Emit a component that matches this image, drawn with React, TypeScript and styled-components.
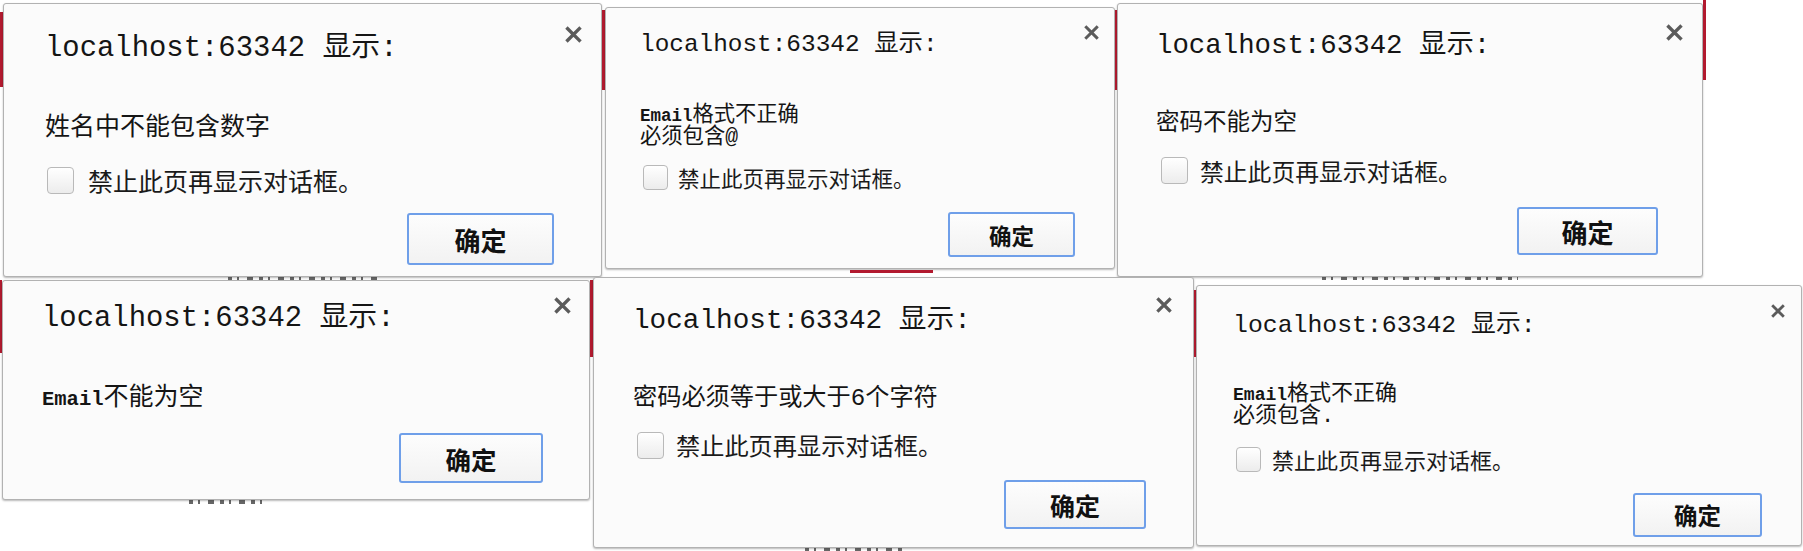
import styled, { createGlobalStyle } from 'styled-components';

const GlobalStyle = createGlobalStyle`
	html, body {
		margin: 0;
		padding: 0;
		background: #fff;
	}
	body {
		width: 1803px;
		height: 551px;
		overflow: hidden;
		font-family: "Noto Sans CJK SC", sans-serif;
		color: #111;
	}
`;

const CJK = `"Noto Sans CJK SC", "Noto Sans", sans-serif`;
const MONO = `"Liberation Mono", "Noto Sans CJK SC", monospace`;

type Spec = {
	w: number;
	h: number;
	mt: number;
	px: number;
	titleSize: number;
	titleTop: number;
	close: { cx: number; cy: number; size: number };
	msg: { top: number; size: number; line: number; lines: string[] };
	check?: { top: number; box: number; left: number; gap: number; size: number };
	btn: { w: number; h: number; right: number; bottom: number; size: number };
};

const Collage = styled.div`
	display: flex;
	flex-direction: column;
`;

const Row = styled.div<{ $h: number }>`
	display: flex;
	align-items: flex-start;
	height: ${p => p.$h}px;
`;

// a sliver of the page behind the dialog, with its red edge
const Seam = styled.div<{ $w: number; $from: number; $to: number }>`
	flex: none;
	align-self: stretch;
	width: ${p => p.$w}px;
	background: linear-gradient(
		to bottom,
		transparent ${p => p.$from}px,
		#b21a2f ${p => p.$from}px,
		#b21a2f ${p => p.$to}px,
		transparent ${p => p.$to}px
	);
`;

const Shot = styled.div`
	flex: none;
	display: flex;
	flex-direction: column;
`;

const Under = styled.div<{ $offset: number; $len: number }>`
	margin-top: 1px;
	margin-left: ${p => p.$offset}px;
	width: ${p => p.$len}px;
	height: 3px;
	background: #b21a2f;
`;

// bits of the form text behind, cut off by the crop
const Peek = styled.div<{ $h: number; $offset: number; $len: number }>`
	flex: none;
	height: ${p => p.$h}px;
	margin-left: ${p => p.$offset}px;
	width: ${p => p.$len}px;
	background: repeating-linear-gradient(
		90deg,
		#333 0 4px,
		transparent 4px 9px,
		#333 9px 11px,
		transparent 11px 19px,
		#333 19px 25px,
		transparent 25px 31px
	);
	opacity: 0.75;
`;

const Box = styled.div<{ $w: number; $h: number; $mt: number }>`
	flex: none;
	box-sizing: border-box;
	width: ${p => p.$w}px;
	height: ${p => p.$h}px;
	margin-top: ${p => p.$mt}px;
	display: flex;
	flex-direction: column;
	background: #fbfbfb;
	border: 1px solid #b2b2b2;
	border-radius: 3px;
	box-shadow: 0 1px 2px rgba(0, 0, 0, 0.28);
`;

const Header = styled.div<{ $pl: number }>`
	display: flex;
	justify-content: space-between;
	align-items: flex-start;
	padding-left: ${p => p.$pl}px;
`;

const Title = styled.div<{ $size: number; $top: number }>`
	margin-top: ${p => p.$top}px;
	font-family: ${MONO};
	font-size: ${p => p.$size}px;
	line-height: 1;
	white-space: nowrap;
	color: #151515;
`;

const Close = styled.span<{ $size: number; $top: number; $right: number }>`
	display: block;
	width: ${p => p.$size}px;
	height: ${p => p.$size}px;
	margin-top: ${p => p.$top}px;
	margin-right: ${p => p.$right}px;
	color: #5b5b5b;

	svg {
		display: block;
		width: 100%;
		height: 100%;
	}
`;

const Message = styled.div<{ $size: number; $line: number; $gap: number; $pl: number }>`
	margin-top: ${p => p.$gap}px;
	padding-left: ${p => p.$pl}px;
	font-family: ${MONO};
	font-size: ${p => p.$size}px;
	line-height: ${p => p.$line}px;
	white-space: nowrap;
	color: #151515;
`;

const MessageLine = styled.div<{ $line: number }>`
	height: ${p => p.$line}px;
`;

const Latin = styled.span`
	font-weight: 700;
	font-size: 0.82em;
	line-height: 0;
`;

const CheckRow = styled.label<{ $gap: number; $pl: number; $h: number }>`
	display: flex;
	align-items: center;
	margin-top: ${p => p.$gap}px;
	padding-left: ${p => p.$pl}px;
	height: ${p => p.$h}px;
`;

const CheckBox = styled.span<{ $box: number; $gap: number }>`
	flex: none;
	box-sizing: border-box;
	width: ${p => p.$box}px;
	height: ${p => p.$box}px;
	margin-right: ${p => p.$gap}px;
	border: 1.5px solid #b9b9b9;
	border-radius: 4px;
	background: linear-gradient(#ffffff, #ececec);
`;

const CheckLabel = styled.span<{ $size: number }>`
	font-family: ${CJK};
	font-size: ${p => p.$size}px;
	line-height: 1;
	white-space: nowrap;
	color: #1a1a1a;
`;

const Footer = styled.div<{ $right: number; $bottom: number }>`
	margin-top: auto;
	display: flex;
	justify-content: flex-end;
	padding-right: ${p => p.$right}px;
	padding-bottom: ${p => p.$bottom}px;
`;

const OkButton = styled.button<{ $w: number; $h: number; $size: number }>`
	box-sizing: border-box;
	width: ${p => p.$w}px;
	height: ${p => p.$h}px;
	padding: 0;
	border: 2px solid #6f9fe9;
	border-radius: 3px;
	background: linear-gradient(#fdfdfd, #f2f2f2);
	font-family: ${CJK};
	font-weight: 700;
	font-size: ${p => p.$size}px;
	color: #111;
`;

function renderLine(text: string) {
	// "Email" comes out in the narrow bold bitmap face
	return text.split(/(Email)/).map((part, i) =>
		part === 'Email' ? <Latin key={i}>{part}</Latin> : part
	);
}

function Dialog({ s }: { s: Spec }) {
	const titleBottom = s.titleTop - 1 + s.titleSize;
	const msgBottom = s.msg.top + s.msg.lines.length * s.msg.line;

	return <Box $w={s.w} $h={s.h} $mt={s.mt}>
		<Header $pl={s.px - 1}>
			<Title $size={s.titleSize} $top={s.titleTop - 1}>localhost:63342 显示:</Title>
			<Close
				$size={s.close.size}
				$top={s.close.cy - s.close.size / 2 - 1}
				$right={s.w - s.close.cx - s.close.size / 2 - 1}
			>
				<svg viewBox="0 0 16 16">
					<path d="M2.5 2.5L13.5 13.5M13.5 2.5L2.5 13.5" stroke="currentColor" strokeWidth="3.2" strokeLinecap="square" fill="none" />
				</svg>
			</Close>
		</Header>
		<Message
			$size={s.msg.size}
			$line={s.msg.line}
			$gap={s.msg.top - titleBottom - 1}
			$pl={s.px - 1}
		>
			{s.msg.lines.map((l, i) => <MessageLine key={i} $line={s.msg.line}>{renderLine(l)}</MessageLine>)}
		</Message>
		{s.check && <CheckRow $gap={s.check.top - msgBottom} $pl={s.check.left - 1} $h={s.check.box}>
			<CheckBox $box={s.check.box} $gap={s.check.gap} />
			<CheckLabel $size={s.check.size}>禁止此页再显示对话框。</CheckLabel>
		</CheckRow>}
		<Footer $right={s.btn.right - 1} $bottom={s.btn.bottom - 1}>
			<OkButton $w={s.btn.w} $h={s.btn.h} $size={s.btn.size}>确定</OkButton>
		</Footer>
	</Box>;
}

const nameDigits: Spec = {
	w: 599, h: 274, mt: 3, px: 42, titleSize: 28.9, titleTop: 32,
	close: { cx: 570, cy: 31, size: 17 },
	msg: { top: 111, size: 25, line: 30, lines: ['姓名中不能包含数字'] },
	check: { top: 164, box: 27, left: 44, gap: 14, size: 25 },
	btn: { w: 147, h: 52, right: 48, bottom: 12, size: 26 },
};

const emailAt: Spec = {
	w: 510, h: 262, mt: 7, px: 35, titleSize: 24.4, titleTop: 26,
	close: { cx: 486, cy: 25, size: 15 },
	msg: { top: 98, size: 21.3, line: 21.5, lines: ['Email格式不正确', '必须包含@'] },
	check: { top: 158, box: 25, left: 38, gap: 10, size: 21.5 },
	btn: { w: 127, h: 45, right: 40, bottom: 12, size: 22.5 },
};

const pwdEmpty: Spec = {
	w: 586, h: 274, mt: 3, px: 39, titleSize: 27.4, titleTop: 29,
	close: { cx: 557, cy: 29, size: 17 },
	msg: { top: 107, size: 23.5, line: 28, lines: ['密码不能为空'] },
	check: { top: 154, box: 27, left: 44, gap: 12, size: 23.8 },
	btn: { w: 141, h: 48, right: 45, bottom: 22, size: 26 },
};

const emailEmpty: Spec = {
	w: 588, h: 220, mt: 0, px: 40, titleSize: 28.9, titleTop: 25,
	close: { cx: 560, cy: 25, size: 17 },
	msg: { top: 104, size: 25, line: 30, lines: ['Email不能为空'] },
	btn: { w: 144, h: 50, right: 47, bottom: 17, size: 25.5 },
};

const pwdLength: Spec = {
	w: 601, h: 271, mt: 0, px: 40, titleSize: 27.7, titleTop: 30,
	close: { cx: 571, cy: 28, size: 16 },
	msg: { top: 107, size: 24.2, line: 30, lines: ['密码必须等于或大于6个字符'] },
	check: { top: 155, box: 27, left: 44, gap: 12, size: 24.2 },
	btn: { w: 142, h: 49, right: 48, bottom: 19, size: 25 },
};

const emailDot: Spec = {
	w: 606, h: 261, mt: 5, px: 37, titleSize: 24.8, titleTop: 28,
	close: { cx: 582, cy: 26, size: 14 },
	msg: { top: 99, size: 22, line: 22.5, lines: ['Email格式不正确', '必须包含.'] },
	check: { top: 162, box: 25, left: 40, gap: 11, size: 22 },
	btn: { w: 129, h: 44, right: 40, bottom: 9, size: 23.5 },
};

export default function App() {
	return <>
		<GlobalStyle />
		<Collage>
			<Row $h={277}>
				<Seam $w={3} $from={12} $to={87} />
				<Dialog s={nameDigits} />
				<Seam $w={3} $from={10} $to={90} />
				<Shot>
					<Dialog s={emailAt} />
					<Under $offset={245} $len={83} />
				</Shot>
				<Seam $w={2} $from={10} $to={90} />
				<Dialog s={pwdEmpty} />
				<Seam $w={3} $from={0} $to={80} />
			</Row>
			<Row $h={274}>
				<Seam $w={2} $from={3} $to={76} />
				<Shot>
					<Peek $h={3} $offset={226} $len={150} />
					<Dialog s={emailEmpty} />
					<Peek $h={4} $offset={187} $len={73} />
				</Shot>
				<Seam $w={3} $from={3} $to={80} />
				<Shot>
					<Dialog s={pwdLength} />
					<Peek $h={3} $offset={212} $len={100} />
				</Shot>
				<Seam $w={2} $from={13} $to={80} />
				<Shot>
					<Peek $h={3} $offset={126} $len={196} />
					<Dialog s={emailDot} />
				</Shot>
			</Row>
		</Collage>
	</>;
}
